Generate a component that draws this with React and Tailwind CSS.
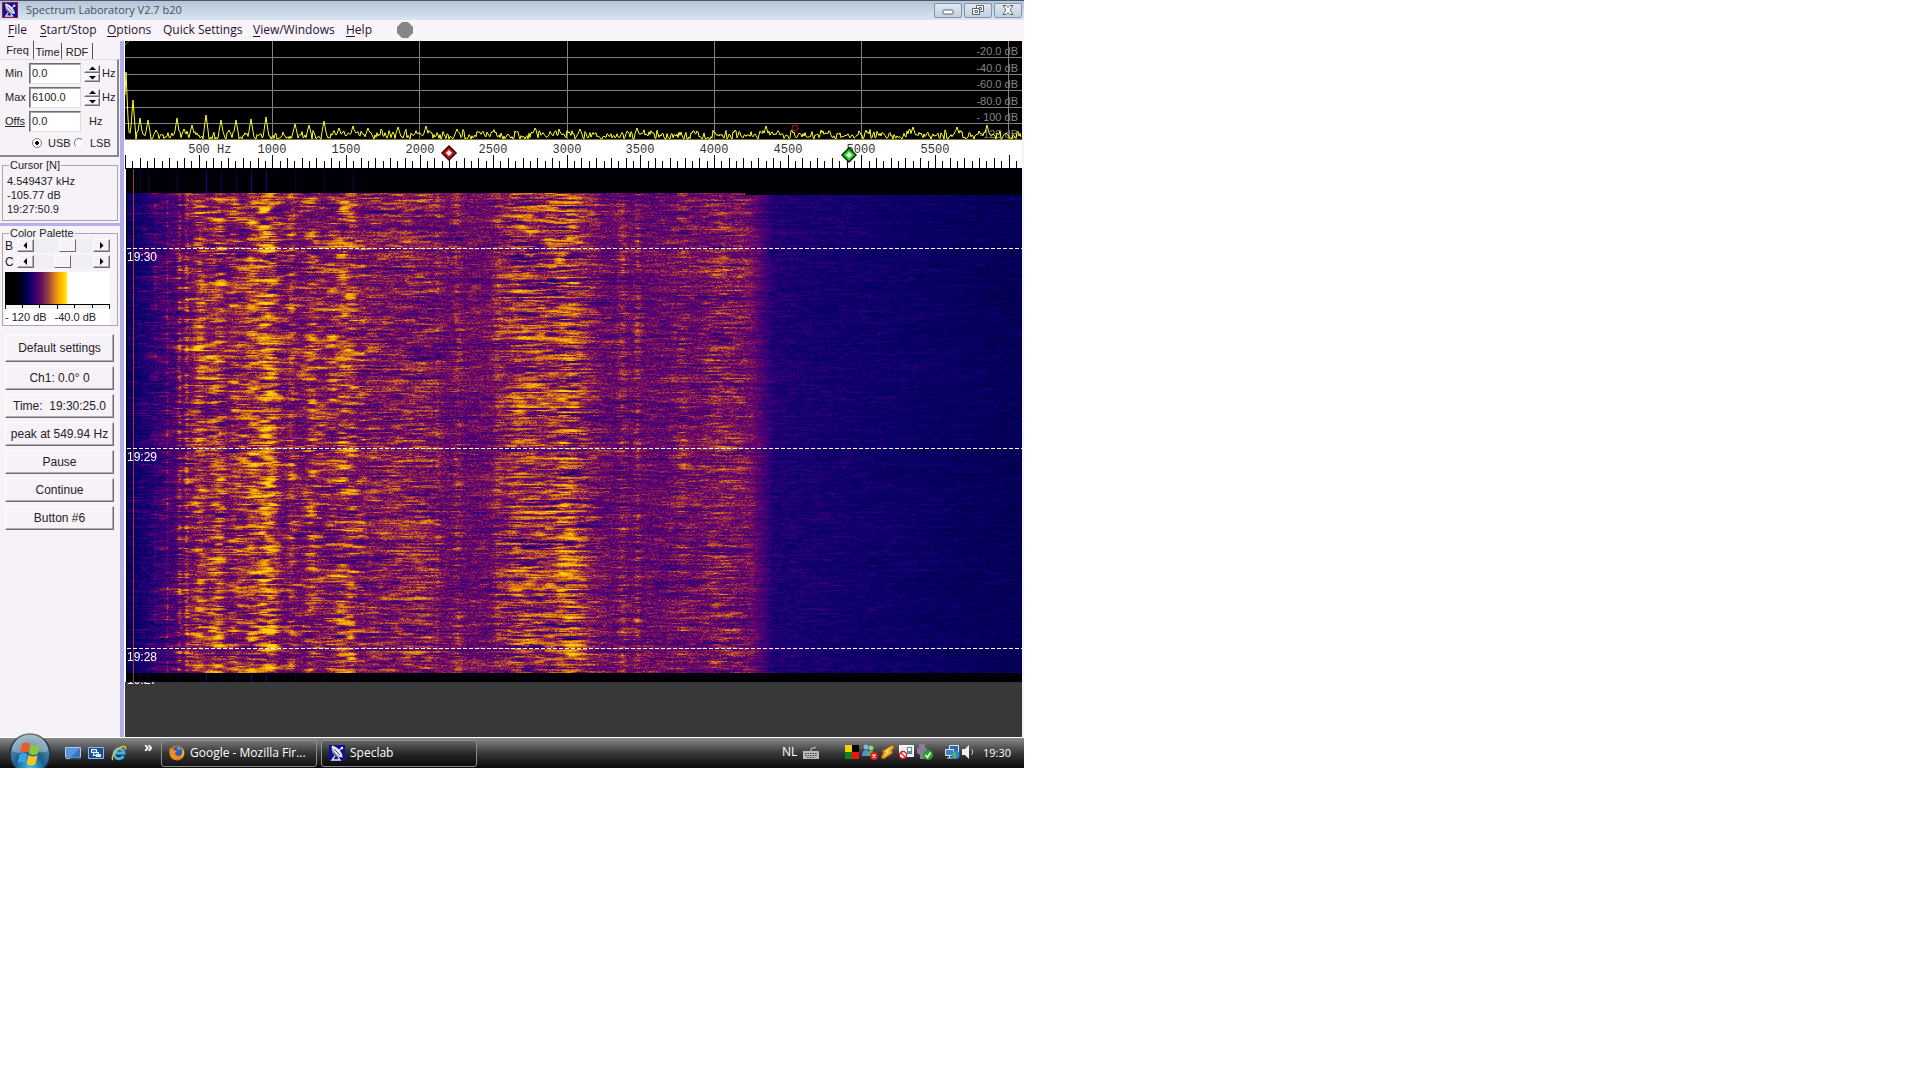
/**
 * Spectrum Laboratory
 * ===================
 * Audio spectrum analyser window with its control panel, the live spectrum,
 * the frequency scale, the waterfall and the desktop taskbar.
 */

import React, { useEffect, useRef } from 'react';

const PLOT_WIDTH = 897;
const PX_PER_HZ = 0.14725;
const WATERFALL_WIDTH = 895;
const WATERFALL_HEIGHT = 513;

const RAISED =
  'border border-t-white border-l-white border-r-[#6e6c70] border-b-[#6e6c70] bg-[#f6f2f7] shadow-[inset_-1px_-1px_0_#b0adb2]';
const SUNKEN =
  'border border-t-[#6e6c70] border-l-[#6e6c70] border-r-[#dedbe0] border-b-[#dedbe0] bg-white shadow-[inset_1px_1px_0_#a5a2a8]';

const MENU = [
  { key: 'F', rest: 'ile', width: 'w-8' },
  { key: 'S', rest: 'tart/Stop', width: 'w-[67px]' },
  { key: 'O', rest: 'ptions', width: 'w-14' },
  { key: '', rest: 'Quick Settings', width: 'w-[90px]' },
  { key: 'V', rest: 'iew/Windows', width: 'w-[93px]' },
  { key: 'H', rest: 'elp', width: 'w-[51px]' },
];

const MACRO_BUTTONS = [
  'Ch1: 0.0° 0',
  'Time:  19:30:25.0',
  'peak at 549.94 Hz',
  'Pause',
  'Continue',
  'Button #6',
];

const DB_LABELS = ['-20.0 dB', '-40.0 dB', '-60.0 dB', '-80.0 dB', '- 100 dB', '-120 dB'];

// [x, y] of the lines that rise out of the noise floor
const PEAKS = [
  [1, 31], [8, 59], [15, 77], [23, 79], [31, 89], [52, 77], [59, 88], [67, 84],
  [81, 74], [96, 79], [104, 89], [111, 79], [126, 78], [141, 76], [170, 83],
  [184, 84], [199, 80], [214, 87], [228, 85], [243, 87], [273, 86], [301, 85],
  [332, 88], [410, 87], [455, 88], [512, 87], [641, 85], [788, 86], [832, 86], [862, 84],
];

// [centre, half width, strength] of the bands in the waterfall
const BANDS = [
  [30, 1, 0.12], [42, 1, 0.2], [54, 2, 0.3], [61, 2, 0.3], [74, 7, 0.36], [92, 8, 0.44],
  [111, 6, 0.28], [125, 7, 0.34], [142, 11, 0.7], [166, 4, 0.28], [187, 7, 0.32],
  [205, 10, 0.12], [221, 12, 0.42], [245, 10, 0.14], [275, 22, 0.22], [300, 14, 0.16],
  [312, 2, 0.14], [332, 4, 0.2], [373, 5, 0.2], [390, 12, 0.22], [412, 24, 0.36],
  [442, 16, 0.46], [462, 14, 0.16], [497, 4, 0.22], [512, 3, 0.22], [557, 8, 0.14],
  [590, 16, 0.16], [612, 18, 0.1],
];

const PALETTE = [
  [0, 0, 0, 0],
  [0.12, 0, 0, 70],
  [0.24, 12, 0, 112],
  [0.34, 62, 0, 118],
  [0.46, 108, 4, 104],
  [0.57, 152, 44, 72],
  [0.7, 208, 112, 26],
  [0.86, 244, 164, 4],
  [1, 255, 210, 16],
];

function hash(x, y) {
  let h = (x * 374761393 + y * 668265263) | 0;
  h = Math.imul(h ^ (h >>> 13), 1274126177);
  return ((h ^ (h >>> 16)) >>> 0) / 4294967296;
}

function smooth(x, y) {
  const xi = Math.floor(x);
  const yi = Math.floor(y);
  const fx = x - xi;
  const fy = y - yi;
  const u = fx * fx * (3 - 2 * fx);
  const v = fy * fy * (3 - 2 * fy);
  const top = hash(xi, yi) * (1 - u) + hash(xi + 1, yi) * u;
  const bottom = hash(xi, yi + 1) * (1 - u) + hash(xi + 1, yi + 1) * u;
  return top * (1 - v) + bottom * v;
}

function paletteColor(level) {
  const v = Math.max(0, Math.min(1, level));
  let i = 1;
  while (i < PALETTE.length - 1 && PALETTE[i][0] < v) i += 1;
  const a = PALETTE[i - 1];
  const b = PALETTE[i];
  const t = (v - a[0]) / (b[0] - a[0]);
  return [1, 2, 3].map((c) => a[c] + (b[c] - a[c]) * t);
}

function floorLevel(x) {
  if (x < 62) return 0.19 + (x / 62) * 0.22;
  if (x < 626) return 0.44;
  if (x < 648) return 0.44 - ((x - 626) / 22) * 0.17;
  return 0.27 - ((x - 648) / 249) * 0.11;
}

function bandLevel(x) {
  return BANDS.reduce((sum, [centre, half, strength]) => {
    const d = (x - centre) / half;
    return sum + strength * Math.exp(-d * d);
  }, 0);
}

function activity(x) {
  if (x < 60) return 0.3 + x / 86;
  if (x < 618) return 1;
  return Math.max(0.4, 1 - (x - 618) / 40);
}

function Waterfall() {
  const canvasRef = useRef(null);

  useEffect(() => {
    const ctx = canvasRef.current.getContext('2d');
    const image = ctx.createImageData(WATERFALL_WIDTH, WATERFALL_HEIGHT);

    for (let px = 0; px < WATERFALL_WIDTH; px += 1) {
      const x = px + 2;
      const floor = floorLevel(x);
      const band = bandLevel(x);
      const active = activity(x);
      const burstGain = x < 240 ? 0.6 : 0.22;
      const start = x < 620 ? 24 : 26;

      for (let y = 0; y < WATERFALL_HEIGHT; y += 1) {
        let level = 0.01;
        if (y >= start && y < 504) {
          const drift = 7 * smooth(7, y / 9);
          const blob = smooth((x + drift) / 10, y / 3.6 + 40);
          const streak = smooth((x + drift) / 11 + 300, y / 1.2);
          const sweep = smooth(x / 50 + 90, y / 1.8);
          const slow = smooth(x / 90 + 20, y / 22 + 60);
          const grain = hash(x + 900, y + 70) + hash((x >> 1) + 50, y + 11) - 1;
          const burst = Math.max(0, blob * 0.5 + streak * 0.5 - 0.54);
          // wide bands are made of thin horizontal streaks, low ones of blobs
          const texture =
            x < 240
              ? blob * 0.75 + (streak - 0.5) * 0.5 + (sweep - 0.5) * 0.3
              : 0.12 + blob * 0.4 + (streak - 0.5) * 0.6 + (sweep - 0.5) * 0.7;
          level =
            floor +
            active * ((streak - 0.5) * 0.12 + (sweep - 0.5) * 0.1 + (slow - 0.5) * 0.05 + burst * burstGain) +
            band * texture +
            grain * (0.03 + active * 0.11);
        }
        const [r, g, b] = paletteColor(level);
        const i = (y * WATERFALL_WIDTH + px) * 4;
        image.data[i] = r;
        image.data[i + 1] = g;
        image.data[i + 2] = b;
        image.data[i + 3] = 255;
      }
    }
    ctx.putImageData(image, 0, 0);

    // carriers visible while the input is silent
    [13, 21, 50, 79, 94, 109, 124, 139, 168, 197, 226].forEach((x, n) => {
      ctx.fillStyle = [3, 6, 7].includes(n) ? '#10087e' : '#08043c';
      ctx.fillRect(x, 1, 1, 23);
      ctx.fillRect(x, 504, 1, 9);
    });
    ctx.fillStyle = '#9a3c28';
    ctx.fillRect(6, 0, 1, WATERFALL_HEIGHT);

    ctx.fillStyle = '#ffffff';
    [79, 279, 479].forEach((y) => {
      for (let x = 0; x < WATERFALL_WIDTH; x += 6) ctx.fillRect(x, y, 4, 1);
    });
  }, []);

  return (
    <div className="relative border-l border-white bg-black pl-px">
      <canvas
        ref={canvasRef}
        width={WATERFALL_WIDTH}
        height={WATERFALL_HEIGHT}
        className="block h-[513px] w-full"
      />
      <span className="absolute left-px top-20 text-[12px] leading-4 text-white">19:30</span>
      <span className="absolute left-px top-[280px] text-[12px] leading-4 text-white">19:29</span>
      <span className="absolute left-px top-[480px] text-[12px] leading-4 text-white">19:28</span>
    </div>
  );
}

function tracePoints() {
  const points = [];
  for (let x = 0; x < PLOT_WIDTH; x += 1) {
    const base = x < 250 ? 95 : 94;
    let y = base + (hash(x >> 1, 5) - 0.5) * 7 + (hash(x, 9) - 0.5) * 5;
    PEAKS.forEach(([px, py]) => {
      const d = Math.abs(x - px);
      if (d < 3) y = Math.min(y, py + d * (95 - py) * 0.36);
    });
    points.push(`${x},${Math.min(98, y).toFixed(1)}`);
  }
  return points.join(' ');
}

function SpectrumPlot() {
  return (
    <div className="relative h-[99px] bg-black">
      <div className="absolute inset-0 grid grid-rows-6 pr-1 text-right text-[11px] leading-5 text-[#85858a]">
        {DB_LABELS.map((label) => (
          <span key={label} className="h-4">{label}</span>
        ))}
      </div>
      <svg
        className="absolute inset-0 h-full w-full"
        viewBox="0 0 897 99"
        preserveAspectRatio="none"
        fill="none"
      >
        <g stroke="#808080" shapeRendering="crispEdges">
          {[16, 33, 49, 66, 82].map((y) => (
            <path key={y} d={`M0 ${y + 0.5}H897`} />
          ))}
          {[147, 294, 442, 589, 736, 883].map((x) => (
            <path key={x} d={`M${x + 0.5} 0V99`} />
          ))}
          <path d="M0 98.5H897" stroke="#77752a" />
        </g>
        <polyline points={tracePoints()} stroke="#ffff28" strokeWidth="1" />
        <circle cx="670" cy="87" r="3" stroke="#c01010" />
        <path d="M0 4l4-4" stroke="#2c8a4a" />
      </svg>
    </div>
  );
}

function FrequencyScale() {
  const ticks = Array.from({ length: 122 }, (_, i) => i * 50);
  const labels = Array.from({ length: 11 }, (_, i) => (i + 1) * 500);

  return (
    <svg
      className="block h-[29px] w-full bg-white"
      viewBox="0 0 897 29"
      preserveAspectRatio="none"
    >
      <g stroke="#000" shapeRendering="crispEdges">
        {ticks.map((hz) => {
          const x = Math.round(hz * PX_PER_HZ) + 0.5;
          const length = hz % 500 === 0 ? 14 : hz % 100 === 0 ? 11 : 8;
          return <path key={hz} d={`M${x} 29v-${length}`} />;
        })}
        <path d="M0 28.5H897" />
      </g>
      <g fontFamily="Liberation Mono, monospace" fontSize="12" fill="#333">
        {labels.map((hz) => (
          <text key={hz} x={Math.round(hz * PX_PER_HZ)} y="13" textAnchor="middle">
            {hz}
          </text>
        ))}
        <text x="92" y="13">Hz</text>
      </g>
      <g strokeWidth="1.5">
        <path d="M324 6l7 7-7 7-7-7z" fill="#c41414" stroke="#3a0000" />
        <path d="M324 10l3 3-3 3-3-3z" fill="#fff" />
        <path d="M724 8l7 7-7 7-7-7z" fill="#18d818" stroke="#022802" />
        <path d="M724 12l3 3-3 3-3-3z" fill="#fff" />
      </g>
    </svg>
  );
}

function Arrow({ d, className }) {
  return (
    <svg className={className} viewBox="0 0 7 7" fill="#000">
      <path d={d} />
    </svg>
  );
}

function FrequencyField({ id, label, value, spinner, underline }) {
  return (
    <div className="flex h-6 items-center">
      <label htmlFor={id} className={`w-6 shrink-0 ${underline ? 'underline' : ''}`}>
        {label}
      </label>
      <input
        id={id}
        type="text"
        defaultValue={value}
        className={`h-[21px] w-[52px] shrink-0 px-0.5 ${SUNKEN}`}
      />
      {spinner ? (
        <div className="ml-[3px] flex w-4 shrink-0 flex-col">
          <button type="button" aria-label={`${label} up`} className={`flex h-2 items-center justify-center ${RAISED}`}>
            <Arrow className="h-[7px] w-[7px]" d="M0 5h7L3.500 1.500z" />
          </button>
          <button type="button" aria-label={`${label} down`} className={`flex h-[9px] items-center justify-center ${RAISED}`}>
            <Arrow className="h-[7px] w-[7px]" d="M0 2h7L3.500 5.500z" />
          </button>
        </div>
      ) : (
        <span className="w-1.5" />
      )}
      <span className="ml-0.5">Hz</span>
    </div>
  );
}

function PaletteSlider({ label, value }) {
  return (
    <div className="flex h-[13px] items-center">
      <label htmlFor={`palette-${label}`} className="w-3 text-[12px] leading-3">
        {label}
      </label>
      <button type="button" aria-label={`${label} less`} className={`flex h-[13px] w-[17px] items-center justify-center ${RAISED}`}>
        <Arrow className="h-[7px] w-[7px]" d="M5 0v7L1.500 3.500z" />
      </button>
      <input
        id={`palette-${label}`}
        type="range"
        min="0"
        max="100"
        defaultValue={value}
        className="m-0 h-[13px] w-[59px] appearance-none bg-[#f0edf3] [&::-webkit-slider-thumb]:h-[13px] [&::-webkit-slider-thumb]:w-[17px] [&::-webkit-slider-thumb]:appearance-none [&::-webkit-slider-thumb]:border [&::-webkit-slider-thumb]:border-t-white [&::-webkit-slider-thumb]:border-r-[#6e6c70] [&::-webkit-slider-thumb]:border-b-[#6e6c70] [&::-webkit-slider-thumb]:border-l-white [&::-webkit-slider-thumb]:bg-[#f6f2f7]"
      />
      <button type="button" aria-label={`${label} more`} className={`flex h-[13px] w-[17px] items-center justify-center ${RAISED}`}>
        <Arrow className="h-[7px] w-[7px]" d="M2 0v7L5.500 3.500z" />
      </button>
    </div>
  );
}

function ControlPanel() {
  return (
    <aside className="flex w-[120px] shrink-0 flex-col bg-[#f6f2f7] text-[11px] leading-[14px] text-[#222]">
      {/* Tabs */}
      <div role="tablist" className="flex h-[18px] items-end pl-0.5">
        <button type="button" role="tab" aria-selected="true" className="h-[18px] w-8 border-r border-[#555]">
          Freq
        </button>
        <button type="button" role="tab" aria-selected="false" className="h-4 w-7 border-r border-[#555] pt-0.5">
          Time
        </button>
        <button type="button" role="tab" aria-selected="false" className="h-4 w-[31px] border-r border-[#555] pt-0.5">
          RDF
        </button>
      </div>
      <div className="mr-px h-[98px] border-b-2 border-r-2 border-[#8a878c] border-t border-t-[#e2dfe4] pl-[5px] pt-px">
        <FrequencyField id="min" label="Min" value="0.0" spinner />
        <FrequencyField id="max" label="Max" value="6100.0" spinner />
        <FrequencyField id="offs" label="Offs" value="0.0" underline />
        <div className="flex items-center pl-[27px] pt-[3px]">
          <input id="usb" type="radio" name="sideband" defaultChecked className="m-0 h-2.5 w-2.5 appearance-none rounded-full border border-[#777] bg-white bg-[radial-gradient(circle,#000_30%,transparent_36%)]" />
          <label htmlFor="usb" className="ml-1.5 w-[26px]">USB</label>
          <input id="lsb" type="radio" name="sideband" className="m-0 h-2.5 w-2.5 appearance-none rounded-full border border-b-[#eee] border-l-[#777] border-r-[#eee] border-t-[#777] bg-white" />
          <label htmlFor="lsb" className="ml-1.5">LSB</label>
        </div>
      </div>

      {/* Cursor readout */}
      <fieldset className="mx-0.5 mt-px h-[63px] border border-[#aaa7ac] px-1">
        <legend className="ml-0.5 px-px leading-[14px]">Cursor [N]</legend>
        <div className="pt-0.5">
          <p>4.549437 kHz</p>
          <p>-105.77 dB</p>
          <p>19:27:50.9</p>
        </div>
      </fieldset>
      <div className="mt-0.5 h-[3px] bg-[#b4b2ee]" />

      {/* Palette */}
      <fieldset className="mx-0.5 mt-px h-[99px] border border-[#aaa7ac] pl-0.5 pr-1">
        <legend className="ml-1 h-3 px-px leading-3">Color Palette</legend>
        <PaletteSlider label="B" value="60" />
        <div className="h-[3px]" />
        <PaletteSlider label="C" value="48" />
        <div className="mt-1 h-8 w-[105px] bg-[linear-gradient(90deg,#000_0%,#000_12%,#00005e_22%,#2a0070_27%,#5e0c64_34%,#a04a40_42%,#e08a1c_48%,#f8b000_52%,#ffe000_58%,#fff_60%,#fff_100%)]" />
        <svg className="block h-[5px] w-[105px]" viewBox="0 0 105 5" stroke="#000" shapeRendering="crispEdges">
          <path d="M0 .5h105M.5 0v5M17.500 0v4M34.500 0v4M52.500 0v5M69.500 0v4M87.500 0v4M104.500 0v5" />
        </svg>
        <div className="flex w-[105px] gap-2 bg-white leading-4">
          <span>- 120 dB</span>
          <span>-40.0 dB</span>
        </div>
      </fieldset>

      {/* Programmable buttons */}
      <div className="ml-[5px] mr-1.5 mt-2 flex flex-col gap-1 text-[12px]">
        <button type="button" className={`h-7 ${RAISED}`}>Default settings</button>
        {MACRO_BUTTONS.map((label) => (
          <button key={label} type="button" className={`h-6 whitespace-pre ${RAISED}`}>
            {label}
          </button>
        ))}
      </div>
    </aside>
  );
}

function DishIcon({ className }) {
  return (
    <svg className={className} viewBox="0 0 16 16">
      <rect width="16" height="16" fill="#10109c" />
      <path d="M3 1C1 7 6 14 13 12z" fill="#8e96a4" />
      <path d="M3 1c5 1 10 6 10 11C9 11 4 6 3 1z" fill="#e4e6ea" stroke="#fff" strokeWidth=".8" />
      <path d="M8 7l5-4M6 11l-3 4h8l-2-3" fill="none" stroke="#e8e8e8" strokeWidth="1.300" />
      <path d="M5 4l6 6M4 8l4 4" stroke="#4a505c" />
      <circle cx="13" cy="3" r="1.200" fill="#fff" />
    </svg>
  );
}

function TitleBar() {
  const frame =
    'flex h-[15px] w-7 items-center justify-center rounded-[2px] border border-[#8293a6] bg-linear-to-b from-[#dfe8f2] to-[#c2d0df]';
  return (
    <header className="flex h-5 items-center border-t border-[#48566a] bg-linear-to-b from-[#b4c5d7] to-[#dae5f1] pb-px pl-0.5 pr-0.5">
      <span className="border border-[#a01838]">
        <DishIcon className="h-3.5 w-3.5" />
      </span>
      <h1 className="ml-2 flex-1 text-[11px] text-[#46505c] [font-family:'Open_Sans','Noto_Sans',sans-serif]">
        Spectrum Laboratory V2.7 b20
      </h1>
      <div className="flex gap-0.5">
        <button type="button" aria-label="Minimize" className={frame}>
          <svg className="h-3 w-3" viewBox="0 0 12 12">
            <rect x="1" y="6" width="10" height="4" rx="1" fill="#fff" stroke="#5a6470" />
          </svg>
        </button>
        <button type="button" aria-label="Restore" className={frame}>
          <svg className="h-3 w-3" viewBox="0 0 12 12" fill="#fff" stroke="#5a6470">
            <path d="M4.500 1.500h7v6h-7zM7 3.500h2.500v2H7z" />
            <path d="M.5 4.500h7v6h-7zM3 6.500h2.500v2H3z" />
          </svg>
        </button>
        <button type="button" aria-label="Close" className={frame}>
          <svg className="h-3 w-3" viewBox="0 0 12 12" fill="#fff" stroke="#5a6470">
            <path d="M1 1.500h3l2 2 2-2h3L8 6l3 4.500H8l-2-2-2 2H1L4 6z" />
          </svg>
        </button>
      </div>
    </header>
  );
}

function MenuBar() {
  return (
    <nav className="flex h-[21px] items-center bg-[#f8f4f9] pb-0.5 pl-2 text-[12px] leading-4 text-[#2a1030] [font-family:'Open_Sans','Noto_Sans',sans-serif]">
      {MENU.map(({ key, rest, width }) => (
        <button key={rest} type="button" className={`whitespace-nowrap text-left ${width}`}>
          {key && <span className="underline underline-offset-2">{key}</span>}
          {rest}
        </button>
      ))}
      <svg className="h-4 w-4" viewBox="0 0 16 16">
        <path d="M5 0h6l5 5v6l-5 5H5l-5-5V5z" fill="#858585" />
      </svg>
    </nav>
  );
}

function StartOrb() {
  return (
    <svg className="h-[42px] w-[42px]" viewBox="0 0 42 42">
      <defs>
        <radialGradient id="orb" cx="50%" cy="85%" r="80%">
          <stop offset="0" stopColor="#38c8f4" />
          <stop offset="0.45" stopColor="#1a5c90" />
          <stop offset="1" stopColor="#7e9cae" />
        </radialGradient>
      </defs>
      <circle cx="21" cy="21" r="20" fill="url(#orb)" stroke="#1c3548" strokeWidth="1.500" />
      <path d="M3 18a18 18 0 0 1 36 0c-8 4-12-2-18 0s-12 3-18 0z" fill="#fff" opacity=".3" />
      <path d="M13 11c3-2 5-2 8 0l-2 9c-3-2-5-2-8 0z" fill="#ee5a24" />
      <path d="M22 11.500c3 2 6 2 9 0l-2 9c-3 2-6 2-9 0z" fill="#8cc63c" />
      <path d="M10.500 21.500c3-2 5-2 8 0l-2 9c-3-2-5-2-8 0z" fill="#38a0e8" />
      <path d="M19.500 22c3 2 6 2 9 0l-2 9c-3 2-6 2-9 0z" fill="#fcc820" />
    </svg>
  );
}

function QuickLaunch() {
  return (
    <div className="flex items-center gap-[7px]">
      <button type="button" aria-label="Show desktop">
        <svg className="block h-4 w-4" viewBox="0 0 16 16">
          <path d="M.5 2.500h15v10H.5z" fill="#3a74c0" stroke="#a8cdf4" />
          <path d="M1 3h14L6 12H1z" fill="#5c94dc" />
          <path d="M0 12.500h16v2H0z" fill="#28486e" />
          <path d="M1 13.500h4" stroke="#7fd07f" />
        </svg>
      </button>
      <button type="button" aria-label="Switch between windows">
        <svg className="block h-4 w-4" viewBox="0 0 16 16">
          <path d="M.5 2.500h15v11H.5z" fill="#1c5090" stroke="#88b8e8" />
          <path d="M3.500 4.500h5v3h-5zM5.500 7.500h5v3h-5z" fill="#3c78b8" stroke="#fff" />
          <path d="M8 9h5v3H8z" fill="#d8ecff" />
        </svg>
      </button>
      <button type="button" aria-label="Internet Explorer">
        <svg className="block h-4 w-4" viewBox="0 0 16 16" fill="none">
          <path d="M12.500 11a5 5 0 1 1 .5-3H4" stroke="#3cb4f4" strokeWidth="2.800" />
          <path d="M2 15C-1 12 6 3 12 1.500c3-.5 3 1.500 2 3" stroke="#f4c430" strokeWidth="1.400" />
        </svg>
      </button>
    </div>
  );
}

function FirefoxIcon() {
  return (
    <svg className="h-4 w-4 shrink-0" viewBox="0 0 16 16">
      <circle cx="8" cy="8" r="7.500" fill="#e8701a" />
      <circle cx="8.500" cy="6.500" r="5" fill="#2a5cb4" />
      <path d="M8 2c2 0 4 1 5 3-1-1-3-1-4 0z" fill="#74b0ec" />
      <path d="M1 3c2 0 3 1 4 2l3 1-2 2c0 3 4 4 7 2-2 5-10 6-12 0C.3 8 .3 5 1 3z" fill="#f08c1c" />
      <path d="M13 3c3 3 2 9-2 11 2-2 3-6 2-11z" fill="#fcd040" />
    </svg>
  );
}

function Tray() {
  return (
    <div className="flex items-center">
      <span className="w-[21px] pb-0.5">NL</span>
      <svg className="h-4 w-4" viewBox="0 0 16 16" fill="#b8b8b8">
        <path d="M0 6h16v8H0z" />
        <path d="M8 6V4c0-2 4 0 5-2" fill="none" stroke="#d0d0d0" />
        <path d="M2 8.500h12M2 10.500h12M4 12.500h8" stroke="#4a4a4a" strokeDasharray="1.500 1" />
      </svg>
      <div className="ml-[26px] flex items-center gap-0.5 pb-0.5">
        <svg className="h-3.5 w-3.5" viewBox="0 0 14 14">
          <path d="M0 0h7v7H0z" fill="#f0d000" />
          <path d="M7 0h7v7H7z" fill="#000" />
          <path d="M0 7h7v7H0z" fill="#108018" />
          <path d="M7 7h7v7H7z" fill="#f01010" />
        </svg>
        <svg className="ml-px h-4 w-4" viewBox="0 0 16 16">
          <circle cx="4" cy="3" r="2.500" fill="#78b8e8" />
          <path d="M0 12c0-8 8-8 8 0z" fill="#4a94d4" />
          <circle cx="9" cy="4" r="2.500" fill="#98cc80" />
          <path d="M5 12c0-7 8-7 8 0z" fill="#6cac60" />
          <circle cx="12" cy="12" r="4" fill="#d82020" />
          <path d="M10.500 10.500l3 3M13.500 10.500l-3 3" stroke="#fff" strokeWidth="1.300" />
        </svg>
        <svg className="h-4 w-4" viewBox="0 0 16 16">
          <path d="M12 1L2 7l1 2-2 5 3 1 9-6-1-2 3-5z" fill="#f09818" stroke="#7c4408" strokeWidth=".8" />
          <path d="M12 2L5 7l2 1-4 5 7-5-2-1z" fill="#ffe488" />
        </svg>
        <svg className="h-4 w-4" viewBox="0 0 16 16">
          <path d="M1.500 1.500h14v11h-14z" fill="#e8ecf0" stroke="#fff" />
          <path d="M9 3h5v7H9z" fill="#6484a0" />
          <path d="M10 4h3v3h-3z" fill="#fff" />
          <circle cx="5" cy="11" r="3.500" fill="#fff" stroke="#d82020" strokeWidth="1.400" />
          <path d="M2.500 8.500l5 5" stroke="#d82020" strokeWidth="1.400" />
        </svg>
        <svg className="ml-px h-4 w-4" viewBox="0 0 16 16">
          <path d="M2 0h6v4H2zM0 4h10v5l-2 2v4H3v-4L0 9z" fill="#8c7c94" />
          <circle cx="11" cy="11" r="5" fill="#28a028" />
          <path d="M8.500 11l2 2.500 3-5" fill="none" stroke="#fff" strokeWidth="1.500" />
        </svg>
      </div>
      <div className="ml-[11px] mr-px flex items-center gap-0.5 pb-0.5">
        <svg className="h-4 w-4" viewBox="0 0 16 16">
          <path d="M5.500 1.500h9v7h-9z" fill="#2c68b4" stroke="#d8e8f8" />
          <path d="M1.500 5.500h8v6h-8z" fill="#3c80cc" stroke="#d8e8f8" />
          <path d="M3 14h6M5.500 12v2" stroke="#d8e8f8" />
          <circle cx="11.500" cy="11" r="4" fill="#2888e0" />
          <path d="M9 9c2-2 4 0 3 2s-1 2 0 4c-3-1-4-4-3-6z" fill="#58c050" />
        </svg>
        <svg className="h-4 w-3.5" viewBox="0 0 14 16">
          <path d="M0 5h3l4-4v14l-4-4H0z" fill="#f0f0f0" />
          <path d="M9.500 5c1.500 2 1.500 4 0 6" fill="none" stroke="#ccc" />
        </svg>
      </div>
      <time className="ml-1.5 text-[11px]">19:30</time>
    </div>
  );
}

function Taskbar() {
  const task =
    'flex h-[27px] w-[156px] items-center gap-[5px] rounded-[3px] border border-[#8c8c8c] px-[7px] text-left';
  return (
    <footer className="relative flex h-[31px] items-center border-t border-white bg-linear-to-b from-[#8a8a8a] via-[#3a3a3a] to-[#0a0a0a] pl-[65px] pr-[13px] text-[12px] text-white [font-family:'Open_Sans','Noto_Sans',sans-serif]">
      <button type="button" aria-label="Start" className="absolute -top-[5px] left-[9px]">
        <StartOrb />
      </button>
      <QuickLaunch />
      <button type="button" aria-label="More" className="ml-[17px] h-6 w-[17px] pb-3 text-left text-[14px] font-bold leading-3">
        »
      </button>
      <div className="flex flex-1 gap-1">
        <button type="button" className={`${task} bg-linear-to-b from-[#777] via-[#333] to-[#151515]`}>
          <FirefoxIcon />
          <span className="whitespace-nowrap">Google - Mozilla Fir...</span>
        </button>
        <button type="button" className={`${task} bg-linear-to-b from-[#666] via-[#282828] to-[#0c0c0c]`}>
          <DishIcon className="h-4 w-4 shrink-0" />
          <span>Speclab</span>
        </button>
      </div>
      <Tray />
    </footer>
  );
}

export default function App() {
  return (
    <div className="min-h-screen bg-white">
      <div className="w-full max-w-5xl overflow-hidden [font-family:'Liberation_Sans',Arial,sans-serif]">
        <TitleBar />
        <MenuBar />
        <main className="flex bg-[#f6f2f7]">
          <ControlPanel />
          <div className="w-1 shrink-0 bg-[#b0aeee]" />
          <section className="mr-0.5 flex min-w-0 flex-1 flex-col border-l border-white">
            <SpectrumPlot />
            <FrequencyScale />
            <Waterfall />
            <div className="h-[55px] bg-[#383838]">
              <div className="flex h-[3px] items-end overflow-hidden pl-0.5 text-[12px] leading-[10px] text-white">
                19:27
              </div>
            </div>
          </section>
        </main>
        <Taskbar />
      </div>
    </div>
  );
}
